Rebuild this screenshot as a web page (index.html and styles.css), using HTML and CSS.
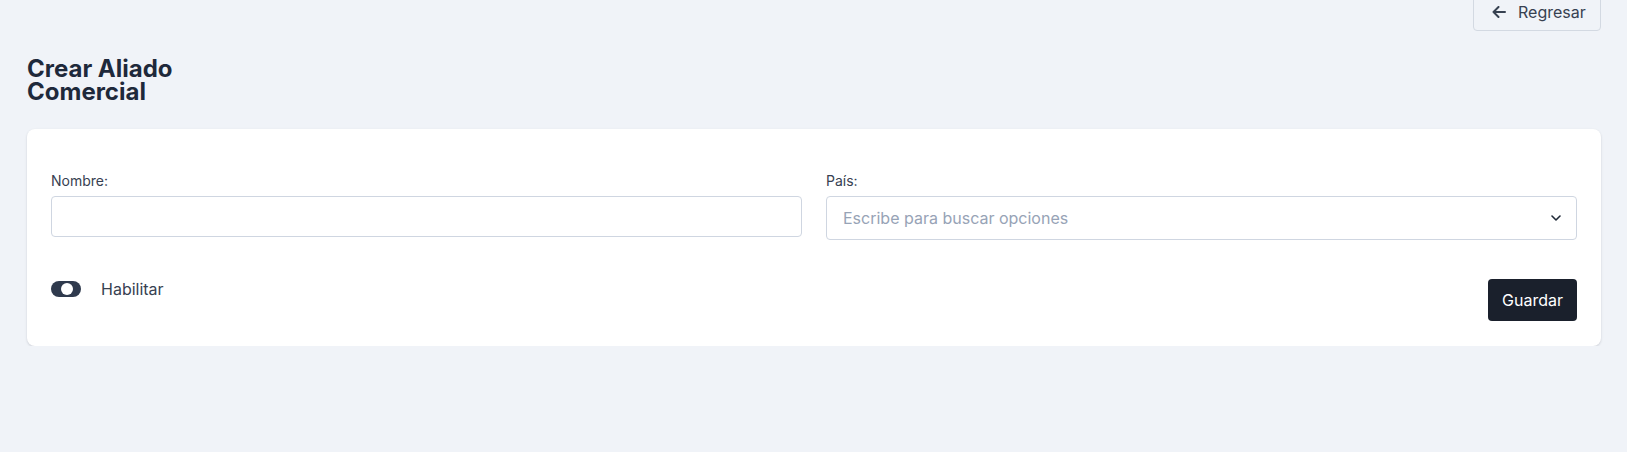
FILE: index.html
```html
<!DOCTYPE html>
<html lang="es">
<head>
<meta charset="utf-8">
<title>Crear Aliado Comercial</title>
<link rel="stylesheet" href="styles.css">
</head>
<body>
<div class="page">
  <div class="topbar">
    <button class="back-btn" type="button">
      <svg class="back-icon" width="14" height="12" viewBox="0 0 14 12" fill="none" stroke="currentColor" stroke-width="2" stroke-linecap="round" stroke-linejoin="round"><path d="M6.5 1 L1.5 6 L6.5 11 M1.5 6 H13"/></svg>
      <span>Regresar</span>
    </button>
  </div>
  <h1 class="title">Crear Aliado Comercial</h1>
  <div class="card">
    <div class="fields">
      <div class="field">
        <label class="label">Nombre:</label>
        <div class="input"></div>
      </div>
      <div class="field">
        <label class="label">País:</label>
        <div class="select">
          <span class="placeholder">Escribe para buscar opciones</span>
          <svg class="chevron" width="10" height="6" viewBox="0 0 10 6" fill="none" stroke="currentColor" stroke-width="1.6" stroke-linecap="round" stroke-linejoin="round"><path d="M1 1 L5 5 L9 1"/></svg>
        </div>
      </div>
    </div>
    <div class="actions">
      <div class="toggle-row">
        <span class="toggle"><span class="knob"></span></span>
        <span class="toggle-label">Habilitar</span>
      </div>
      <button class="save-btn" type="button">Guardar</button>
    </div>
  </div>
</div>
</body>
</html>
```
FILE: styles.css
```css
* { box-sizing: border-box; }
html, body { margin: 0; padding: 0; }
body {
  background: #f0f3f8;
  font-family: Inter, "Noto Sans", sans-serif;
  color: #1f2937;
}
.page {
  padding: 0 26px 0 27px;
}
.topbar {
  display: flex;
  justify-content: flex-end;
  margin-top: -7px;
}
.back-btn {
  display: flex;
  align-items: center;
  gap: 12px;
  height: 38px;
  width: 128px;
  padding: 0 16px 0 18px;
  background: transparent;
  border: 1px solid #d3d9e2;
  border-radius: 4px;
  font-family: inherit;
  font-size: 16px;
  color: #374151;
}
.back-icon { color: #374151; flex: none; }
.title {
  margin: 26px 0 26px;
  width: 200px;
  font-size: 24px;
  line-height: 23px;
  font-weight: 700;
  color: #1e293b;
}
.card {
  background: #fff;
  border-radius: 8px;
  box-shadow: 0 1px 3px rgba(15, 23, 42, 0.1), 0 1px 2px rgba(15, 23, 42, 0.06);
  padding: 42px 24px 25px;
}
.fields {
  display: grid;
  grid-template-columns: 1fr 1fr;
  column-gap: 24px;
  align-items: start;
}
.field { display: flex; flex-direction: column; }
.label {
  font-size: 14px;
  line-height: 20px;
  color: #374151;
  margin-bottom: 5px;
}
.input {
  height: 41px;
  border: 1px solid #cfd6e1;
  border-radius: 4px;
  background: #fff;
}
.select {
  height: 44px;
  border: 1px solid #cfd6e1;
  border-radius: 4px;
  background: #fff;
  display: flex;
  align-items: center;
  justify-content: space-between;
  padding: 0 15px 0 16px;
}
.placeholder {
  font-size: 16px;
  color: #97a3b6;
}
.chevron { color: #1f2937; }
.actions {
  display: flex;
  justify-content: space-between;
  align-items: flex-start;
  margin-top: 39px;
}
.toggle-row {
  display: flex;
  align-items: center;
  height: 20px;
  gap: 20px;
}
.toggle {
  position: relative;
  width: 30px;
  height: 16px;
  border-radius: 8px;
  background: #2f3a4d;
  display: block;
}
.knob {
  position: absolute;
  left: 10px;
  top: 2px;
  width: 12px;
  height: 12px;
  border-radius: 50%;
  background: #fff;
}
.toggle-label {
  font-size: 16px;
  color: #374151;
}
.save-btn {
  height: 42px;
  padding: 0 14px;
  background: #1a202c;
  color: #fff;
  border: none;
  border-radius: 4px;
  font-family: inherit;
  font-size: 16px;
  font-weight: 400;
}
```
